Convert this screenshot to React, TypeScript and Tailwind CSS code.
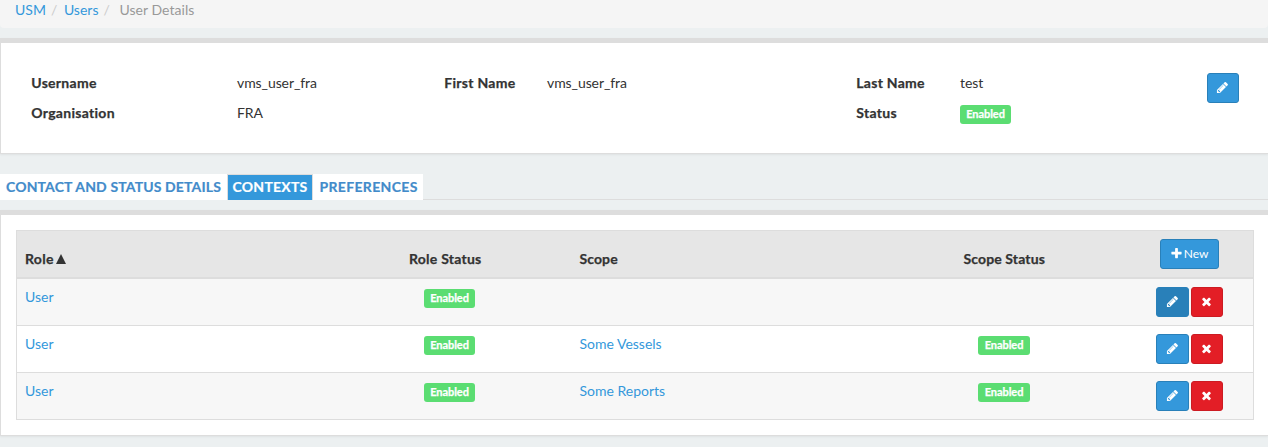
import React from "react";

const PENCIL =
  "M491 1536l91-91-235-235-91 91v107h128v128h107zm523-928q0-22-22-22-10 0-17 7l-542 542q-7 7-7 17 0 22 22 22 10 0 17-7l542-542q7-7 7-17zm-54-192l416 416-832 832h-416v-416zm683 96q0 53-37 90l-166 166-416-416 166-165q36-38 90-38 53 0 91 38l235 234q37 39 37 91z";
const TIMES =
  "M1490 1322q0 40-28 68l-136 136q-28 28-68 28t-68-28l-294-294-294 294q-28 28-68 28t-68-28l-136-136q-28-28-28-68t28-68l294-294-294-294q-28-28-28-68t28-68l136-136q28-28 68-28t68 28l294 294 294-294q28-28 68-28t68 28l136 136q28 28 28 68t-28 68l-294 294 294 294q28 28 28 68z";
const PLUS =
  "M1600 736v192q0 40-28 68t-68 28h-416v416q0 40-28 68t-68 28h-192q-40 0-68-28t-28-68v-416h-416q-40 0-68-28t-28-68v-192q0-40 28-68t68-28h416v-416q0-40 28-68t68-28h192q40 0 68 28t28 68v416h416q40 0 68 28t28 68z";

function Icon({ d }: { d: string }) {
  return (
    <svg className="mb-px size-[13px] shrink-0 fill-white" viewBox="0 0 1792 1792" aria-hidden="true">
      <path d={d} />
    </svg>
  );
}

function Badge({ wide = false }: { wide?: boolean }) {
  return (
    <span
      className={`flex h-[19px] items-center justify-center rounded-[3px] bg-[#5bdd72] pb-0.5 text-[11px] leading-none font-bold tracking-[-0.05px] text-white [-webkit-text-stroke:0.25px] ${wide ? "w-[52px]" : "w-[51px]"}`}
    >
      Enabled
    </span>
  );
}

function EditButton({ active = false, wide = false }: { active?: boolean; wide?: boolean }) {
  return (
    <button
      className={`flex h-[30px] items-center justify-center rounded-[3px] border border-[#2980b9] ${wide ? "w-[33px]" : "w-8 pr-px"} ${active ? "bg-[#2980b9]" : "bg-[#3498db]"}`}
    >
      <Icon d={PENCIL} />
    </button>
  );
}

function Field({ label, labelClass, children }: { label: string; labelClass: string; children: React.ReactNode }) {
  return (
    <div className="flex h-[30px]">
      <b className={`shrink-0 pl-[0.3px] tracking-[0.28px] [-webkit-text-stroke:0.25px] ${labelClass}`}>{label}</b>
      <div className="tracking-[-0.08px]">{children}</div>
    </div>
  );
}

const rows = [
  { role: "User", scope: "", active: true },
  { role: "User", scope: "Some Vessels", active: false },
  { role: "User", scope: "Some Reports", active: false },
];

const COLS = "grid grid-cols-[384px_170px_384px_auto_106px]";

export default function App() {
  return (
    <div className="h-[447px] overflow-hidden bg-[#ecf0f1] font-[Lato,sans-serif] text-sm leading-5 text-[#333]">
      <nav className="flex h-7 rounded-b bg-[#f5f5f5] pl-[15px]">
        <a className="text-[#3498db]">USM</a>
        <span className="w-[18px] pl-[5px] text-[#ccc]">/</span>
        <a className="text-[#3498db]">Users</a>
        <span className="w-[21px] pl-[5px] text-[#ccc]">/</span>
        <span className="tracking-[0.05px] text-[#999]">User Details</span>
      </nav>

      <section className="mt-2.5 flex h-[116px] border-t-[5px] border-b border-l border-[#ddd] bg-white pt-[30px] pl-[30px] shadow-[0_1px_2px_rgba(0,0,0,0.06)]">
        <div className="w-[413px]">
          <Field label="Username" labelClass="w-[206px]">vms_user_fra</Field>
          <Field label="Organisation" labelClass="w-[206px]">FRA</Field>
        </div>
        <div className="w-[412px]">
          <Field label="First Name" labelClass="w-[103px]">vms_user_fra</Field>
        </div>
        <div className="w-[351px]">
          <Field label="Last Name" labelClass="w-[104px]">test</Field>
          <Field label="Status" labelClass="w-[104px]">
            <div className="pt-0.5"><Badge /></div>
          </Field>
        </div>
        <EditButton />
      </section>

      <div className="mt-5 flex h-[26px] font-bold tracking-[0.14px] text-[#428bca] [-webkit-text-stroke:0.2px]">
        <div className="w-[227px] bg-white pt-[3px] pl-1.5 whitespace-nowrap">CONTACT AND STATUS DETAILS</div>
        <div className="w-[86px] border border-b-0 border-[#ddd] bg-[#3498db] pt-0.5 pl-[4.5px] tracking-[0.25px] text-white">CONTEXTS</div>
        <div className="w-[110px] bg-white pt-[3px] pl-[6.5px] tracking-[0.33px]">PREFERENCES</div>
        <div className="flex-1 border-b border-[#ddd]" />
      </div>

      <section className="mt-2.5 h-[226px] border-t-[5px] border-b border-l border-[#ddd] bg-white pt-[15px] pr-3.5 pl-[15px] shadow-[0_1px_2px_rgba(0,0,0,0.06)]">
        <div className="border border-[#ddd]">
          <div className={`${COLS} h-12 items-end border-b-2 border-[#ddd] bg-[#e6e6e6] pb-2 pl-2 font-bold`}>
            <div className="flex items-center tracking-[0.3px] [-webkit-text-stroke:0.25px]">
              Role
              <svg className="ml-0.5 h-2.5 w-2.5 fill-[#333]" viewBox="0 0 10 10" aria-hidden="true">
                <path d="M5 0L10 10H0z" />
              </svg>
            </div>
            <div className="tracking-[0.25px] [-webkit-text-stroke:0.25px]">Role Status</div>
            <div className="pl-[0.5px] tracking-[0.1px] [-webkit-text-stroke:0.25px]">Scope</div>
            <div className="pl-[0.5px] tracking-[0.12px] [-webkit-text-stroke:0.25px]">Scope Status</div>
            <div className="pl-[13px]">
              <button className="flex h-[30px] w-[59px] items-center justify-center rounded-[3px] border border-[#2980b9] bg-[#3498db] pr-px text-xs font-normal text-white">
                <Icon d={PLUS} />
                <span className="pl-px">New</span>
              </button>
            </div>
          </div>
          {rows.map((row, i) => (
            <div
              key={i}
              className={`${COLS} h-[47px] border-b border-[#ddd] pt-2 pl-2 text-[#3498db] last:h-[46px] last:border-b-0 odd:bg-white even:bg-[#f7f7f7]`}
            >
              <a>{row.role}</a>
              <div className="pt-0.5 pl-[15px]"><Badge /></div>
              <a className="pl-[0.5px]">{row.scope}</a>
              <div className="pt-0.5 pl-[15px]">{row.scope && <Badge wide />}</div>
              <div className="flex gap-0.5 pl-[9px]">
                <EditButton active={row.active} wide />
                <button className="flex h-[30px] w-8 items-center justify-center rounded-[3px] border border-[#cc1b22] bg-[#e31e26] pr-px">
                  <Icon d={TIMES} />
                </button>
              </div>
            </div>
          ))}
        </div>
      </section>
    </div>
  );
}
